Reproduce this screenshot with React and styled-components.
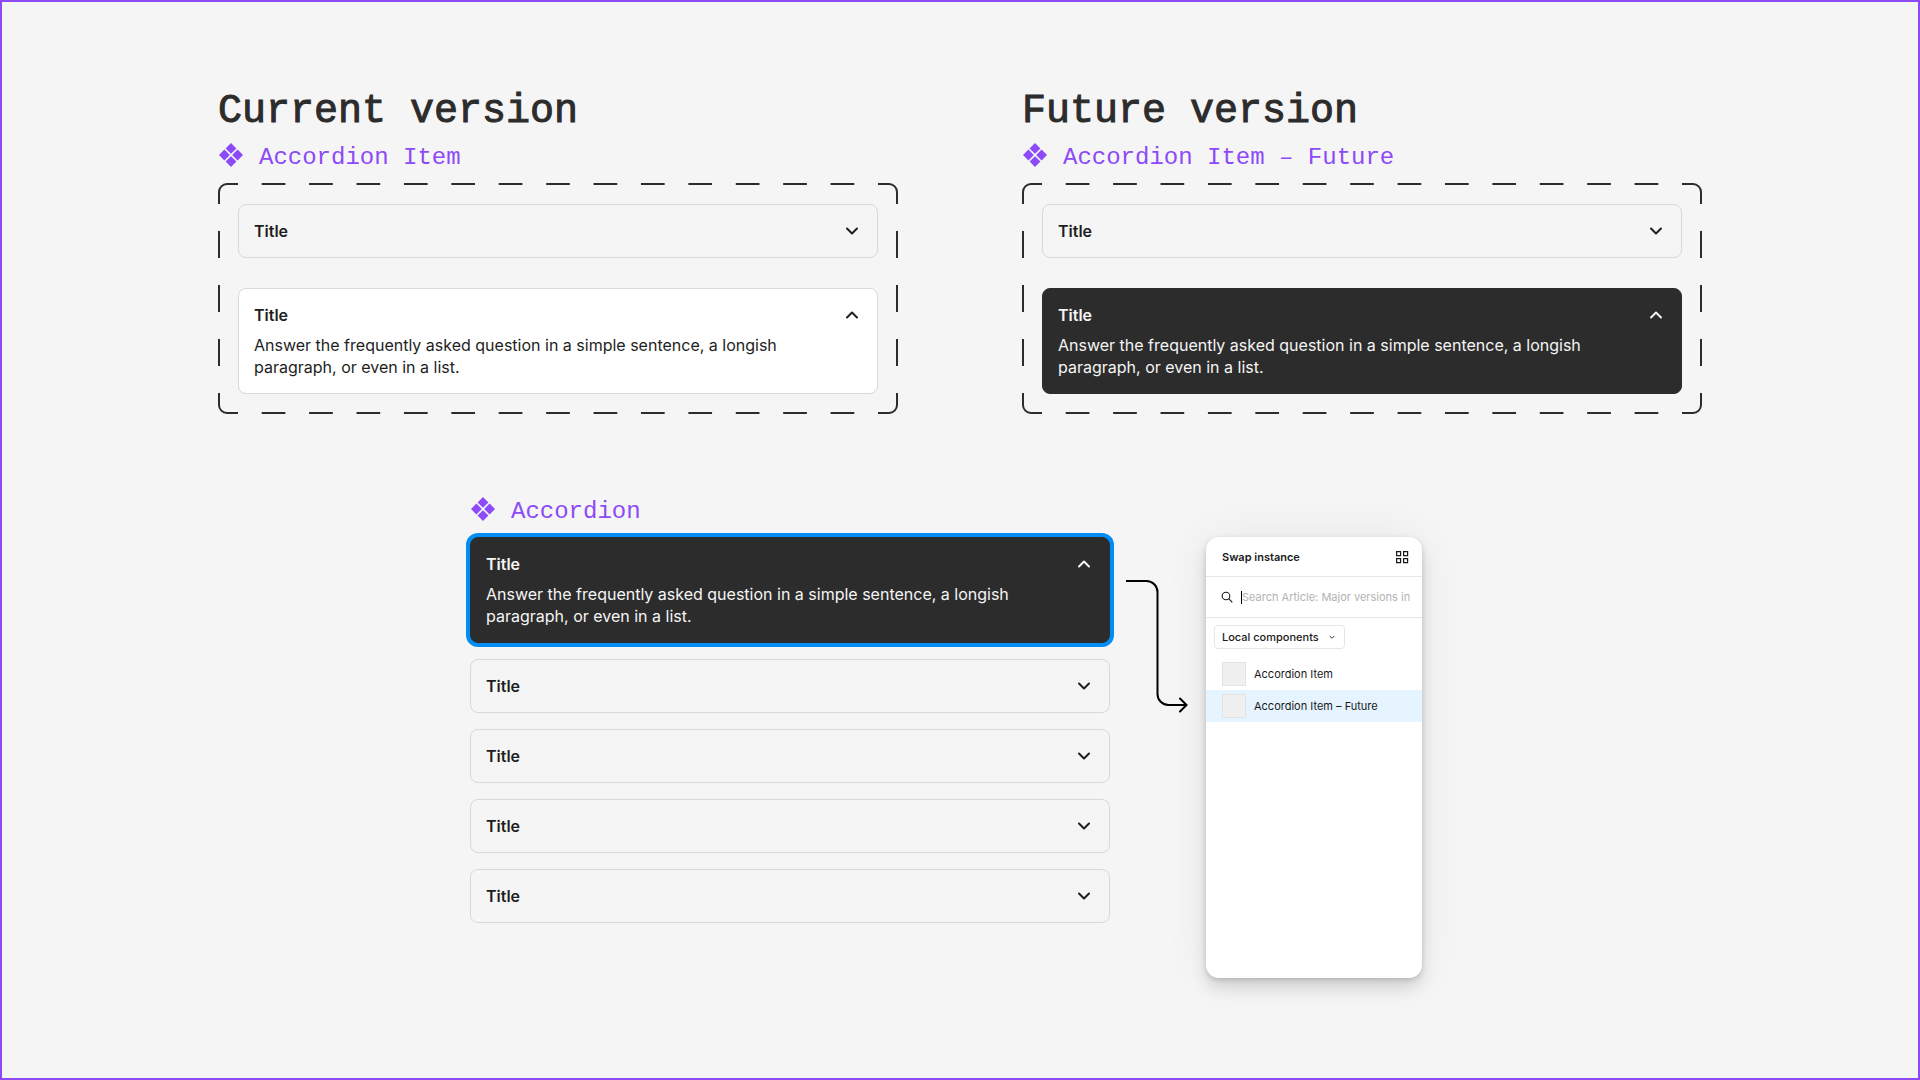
import React, { useId, useState } from "react";
import styled, { createGlobalStyle } from "styled-components";

const purple = "#8c4af8";
const ink = "#2c2c2c";
const mono = `"Liberation Mono", "DejaVu Sans Mono", monospace`;

const GlobalStyle = createGlobalStyle`
  *, *::before, *::after { box-sizing: border-box; }
  body {
    margin: 0;
    background: #f5f5f5;
    color: #1e1e1e;
    font-family: Inter, "Liberation Sans", sans-serif;
  }
  h1, h2, h3, p, ul { margin: 0; padding: 0; }
  button, input, select { font: inherit; color: inherit; }
`;

const Frame = styled.main`
  display: flex;
  flex-direction: column;
  gap: 83px;
  min-height: 100vh;
  padding: 86px 24px 48px;
  border: 2px solid ${purple};
`;

const Versions = styled.div`
  display: flex;
  justify-content: center;
  gap: 124px;
`;

const Version = styled.section`
  flex: 0 1 680px;
  min-width: 0;
`;

const Heading = styled.h1`
  font: 400 40px/48px ${mono};
  color: ${ink};
  -webkit-text-stroke: 1px ${ink};
`;

const Label = styled.h2`
  display: flex;
  gap: 16px;
  height: 40px;
  padding-left: 1px;
  font: 400 24px/30px ${mono};
  color: ${purple};

  svg { flex: none; width: 24px; height: 24px; }
`;

const VersionLabel = styled(Label)`
  margin-top: 7px;
`;

const Variants = styled.div`
  position: relative;
  display: grid;
  gap: 30px;
  padding: 21px 20px 20px;
`;

const DashedOutline = styled.svg`
  position: absolute;
  inset: 0;
  width: 100%;
  height: 100%;
  pointer-events: none;
`;

const tones = {
  plain: { background: "#f5f5f5", border: "#d9d9d9", color: "#1e1e1e" },
  light: { background: "#ffffff", border: "#d9d9d9", color: "#1e1e1e" },
  dark: { background: ink, border: ink, color: "#f5f5f5" },
};

const Card = styled.article`
  padding: 15px;
  border: 1px solid ${(p) => tones[p.$tone].border};
  border-radius: 8px;
  background: ${(p) => tones[p.$tone].background};
  color: ${(p) => tones[p.$tone].color};
  box-shadow: ${(p) => (p.$selected ? "0 0 0 4px #008df5" : "none")};
`;

const CardHeader = styled.button`
  display: flex;
  align-items: center;
  justify-content: space-between;
  width: 100%;
  padding: 0;
  border: 0;
  background: none;
  font-size: 16px;
  font-weight: 600;
  line-height: 22px;
  text-align: left;
  cursor: pointer;

  svg { width: 20px; height: 20px; }
`;

const CardText = styled.p`
  margin-top: 8px;
  font-size: 16px;
  line-height: 22px;
`;

const Composition = styled.section`
  display: grid;
  grid-template-columns: minmax(0, 640px) 96px 216px;
  justify-content: center;
  padding-right: 28px;
`;

const CompositionLabel = styled(Label)`
  grid-column: 1 / -1;
`;

const Stack = styled.div`
  display: grid;
  gap: 16px;
  align-content: start;
`;

const Connector = styled.svg`
  width: 62px;
  height: 134px;
  margin: 43px 0 0 16px;
`;

const Panel = styled.aside`
  min-height: 441px;
  border-radius: 13px;
  background: #fff;
  color: #1a1a1a;
  font-size: 11px;
  line-height: 16px;
  box-shadow: 0 10px 16px rgba(0, 0, 0, 0.12), 0 2px 5px rgba(0, 0, 0, 0.15),
    0 0 48px rgba(0, 0, 0, 0.06);
`;

const PanelHeader = styled.header`
  display: flex;
  align-items: center;
  justify-content: space-between;
  height: 40px;
  padding: 0 12px 0 16px;
  border-bottom: 1px solid #e6e6e6;
`;

const PanelTitle = styled.h3`
  font-size: 11px;
  font-weight: 600;
`;

const IconButton = styled.button`
  display: flex;
  padding: 0;
  border: 0;
  background: none;
  cursor: pointer;

  svg { width: 16px; height: 16px; }
`;

const Search = styled.label`
  display: flex;
  align-items: center;
  height: 41px;
  padding: 0 12px 0 15px;
  border-bottom: 1px solid #e6e6e6;

  svg { flex: none; width: 12px; height: 12px; margin-right: 8px; }
`;

const Caret = styled.span`
  flex: none;
  width: 1px;
  height: 13px;
  background: #000;
`;

const SearchInput = styled.input`
  flex: 1;
  min-width: 0;
  padding: 0;
  border: 0;
  outline: 0;
  background: none;

  &::placeholder { color: #b3b3b3; opacity: 1; }
`;

const Filter = styled.div`
  padding: 7px 8px 9px;
`;

const SelectBox = styled.div`
  position: relative;
  width: 131px;

  svg {
    position: absolute;
    top: 8px;
    right: 9px;
    width: 8px;
    height: 8px;
    pointer-events: none;
  }
`;

const Select = styled.select`
  display: block;
  width: 100%;
  height: 24px;
  padding: 0 20px 0 7px;
  border: 1px solid #e6e6e6;
  border-radius: 4px;
  background: #fff;
  font-weight: 500;
  appearance: none;
`;

const Results = styled.ul`
  list-style: none;
`;

const Result = styled.button`
  display: flex;
  align-items: center;
  gap: 8px;
  width: 100%;
  height: 32px;
  padding: 0 16px;
  border: 0;
  background: ${(p) => (p.$active ? "#e5f4ff" : "transparent")};
  text-align: left;
  cursor: pointer;

  &::before {
    content: "";
    width: 24px;
    height: 24px;
    border: 1px solid #e3e3e3;
    background: #f0f0f0;
  }
`;

function ComponentIcon() {
  return (
    <svg viewBox="0 0 24 24" fill="currentColor" aria-hidden="true">
      <path d="M12 0l5.4 5.4L12 10.800l-5.400-5.400zM12 13.200l5.400 5.400L12 24l-5.400-5.400zM5.400 6.600l5.400 5.400-5.400 5.400L0 12zM18.600 6.600L24 12l-5.400 5.400-5.400-5.400z" />
    </svg>
  );
}

function Chevron({ up }) {
  return (
    <svg viewBox="0 0 20 20" fill="none" stroke="currentColor" strokeWidth="2" strokeLinecap="round" strokeLinejoin="round" aria-hidden="true">
      <path d={up ? "M5 12.500l5-5 5 5" : "M5 7.500l5 5 5-5"} />
    </svg>
  );
}

function Outline() {
  const across = 640 / 27;
  const down = 189 / 7;
  return (
    <DashedOutline viewBox="0 0 680 231" preserveAspectRatio="none" fill="none" stroke={ink} strokeWidth="2" aria-hidden="true">
      <path d="M1 21V9a8 8 0 0 1 8-8h11M660 1h11a8 8 0 0 1 8 8v12M679 210v12a8 8 0 0 1-8 8h-11M20 230H9a8 8 0 0 1-8-8v-12" />
      <path d="M20 1H660M20 230H660" strokeDasharray={across} strokeDashoffset={across} />
      <path d="M1 21V210M679 21V210" strokeDasharray={down} strokeDashoffset={down} />
    </DashedOutline>
  );
}

function AccordionItem({ openTone = "light", defaultOpen = false, selected = false }) {
  const [open, setOpen] = useState(defaultOpen);
  const id = useId();
  return (
    <Card $tone={open ? openTone : "plain"} $selected={selected}>
      <CardHeader type="button" aria-expanded={open} aria-controls={id} onClick={() => setOpen(!open)}>
        Title
        <Chevron up={open} />
      </CardHeader>
      {open && (
        <CardText id={id}>
          Answer the frequently asked question in a simple sentence, a longish paragraph, or even in a list.
        </CardText>
      )}
    </Card>
  );
}

function VersionBlock({ heading, name, openTone }) {
  return (
    <Version>
      <Heading>{heading}</Heading>
      <VersionLabel>
        <ComponentIcon />
        {name}
      </VersionLabel>
      <Variants>
        <Outline />
        <AccordionItem openTone={openTone} />
        <AccordionItem openTone={openTone} defaultOpen />
      </Variants>
    </Version>
  );
}

function SwapPanel() {
  const [active, setActive] = useState("Accordion Item – Future");
  return (
    <Panel>
      <PanelHeader>
        <PanelTitle>Swap instance</PanelTitle>
        <IconButton type="button" aria-label="Grid view">
          <svg viewBox="0 0 16 16" fill="none" stroke="#1a1a1a" strokeWidth="1.2">
            <path d="M2.600 2.600h4v4h-4zM9.600 2.600h4v4h-4zM2.600 9.600h4v4h-4zM9.600 9.600h4v4h-4z" />
          </svg>
        </IconButton>
      </PanelHeader>
      <Search>
        <svg viewBox="0 0 12 12" fill="none" stroke="#1a1a1a" strokeWidth="1.100" aria-hidden="true">
          <circle cx="5" cy="5" r="3.800" />
          <path d="M7.700 7.700L11.300 11.300" />
        </svg>
        <Caret />
        <SearchInput type="text" aria-label="Search" placeholder="Search Article: Major versions in" />
      </Search>
      <Filter>
        <SelectBox>
          <Select aria-label="Library" defaultValue="local">
            <option value="local">Local components</option>
          </Select>
          <svg viewBox="0 0 8 8" fill="none" stroke="#333" aria-hidden="true">
            <path d="M1.700 3l2.300 2.300L6.300 3" />
          </svg>
        </SelectBox>
      </Filter>
      <Results>
        {["Accordion Item", "Accordion Item – Future"].map((name) => (
          <li key={name}>
            <Result type="button" $active={name === active} onClick={() => setActive(name)}>
              {name}
            </Result>
          </li>
        ))}
      </Results>
    </Panel>
  );
}

export default function App() {
  return (
    <>
      <GlobalStyle />
      <Frame>
        <Versions>
          <VersionBlock heading="Current version" name="Accordion Item" openTone="light" />
          <VersionBlock heading="Future version" name="Accordion Item – Future" openTone="dark" />
        </Versions>
        <Composition>
          <CompositionLabel>
            <ComponentIcon />
            Accordion
          </CompositionLabel>
          <Stack>
            <AccordionItem openTone="dark" defaultOpen selected />
            <AccordionItem />
            <AccordionItem />
            <AccordionItem />
            <AccordionItem />
          </Stack>
          <Connector viewBox="0 0 62 134" fill="none" stroke="#000" strokeWidth="2" aria-hidden="true">
            <path d="M0 1h20.500a11 11 0 0 1 11 11v102a11 11 0 0 0 11 11H60.500" />
            <path d="M54 118.500l6.500 6.500-6.500 6.500" strokeLinecap="round" />
          </Connector>
          <SwapPanel />
        </Composition>
      </Frame>
    </>
  );
}
